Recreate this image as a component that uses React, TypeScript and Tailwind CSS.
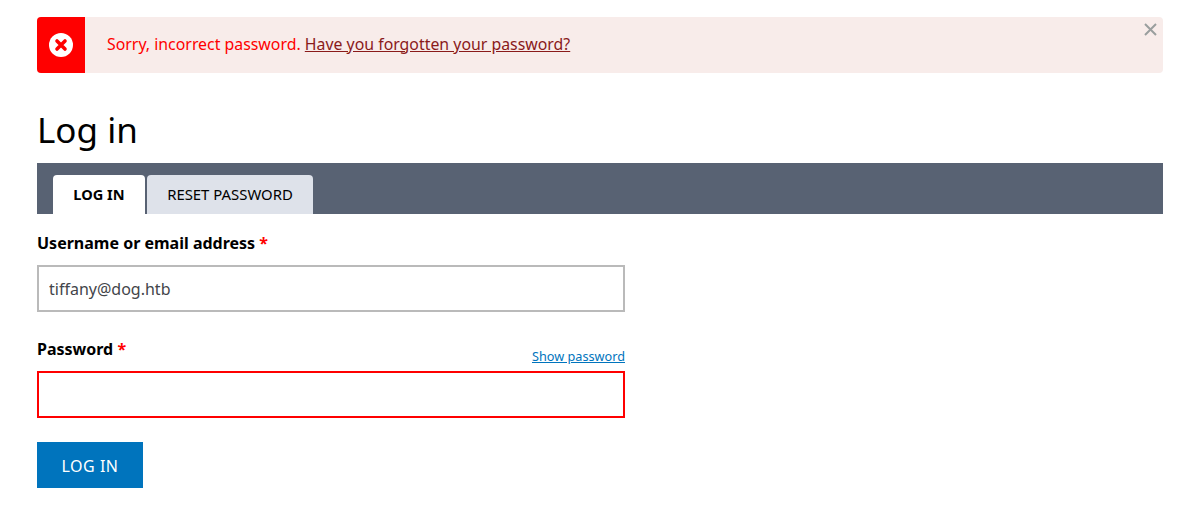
export default function App() {
  return (
    <div className="min-h-[510px] bg-white px-[37px] pt-[17px] pr-[14px] font-['Noto_Sans',sans-serif] text-black">
      {/* Error message */}
      <div className="relative flex h-[56px] items-center rounded-[4px] bg-[#f8ecea]">
        <div className="flex h-full w-[48px] items-center justify-center rounded-l-[4px] bg-[#ff0000]">
          <svg width="24" height="24" viewBox="0 0 24 24">
            <circle cx="12" cy="12" r="12" fill="#fff" />
            <path d="M8 8l8 8M16 8l-8 8" stroke="#ff0000" strokeWidth="3.6" strokeLinecap="round" />
          </svg>
        </div>
        <p className="ml-[22px] -mt-[1px] text-[15.87px] text-[#ff0000]">
          Sorry, incorrect password.{' '}
          <a href="#" className="text-[#8a1a1a] underline">Have you forgotten your password?</a>
        </p>
        <svg className="absolute right-[6px] top-[6px]" width="13" height="13" viewBox="0 0 13 13">
          <path d="M1 1l11 11M12 1L1 12" stroke="#9a9e9e" strokeWidth="2" />
        </svg>
      </div>

      <h1 className="mt-[30px] text-[35px] leading-[54px]">Log in</h1>

      {/* Tabs */}
      <div className="mt-[6px] flex h-[51px] items-end gap-[2px] bg-[#586273] pl-[16px]">
        <a href="#" className="flex h-[39px] w-[92px] items-center justify-center rounded-t-[4px] bg-white text-[14.6px] font-bold">LOG IN</a>
        <a href="#" className="flex h-[39px] w-[166px] items-center justify-center rounded-t-[4px] bg-[#dee2ea] text-[14.9px]">RESET PASSWORD</a>
      </div>

      {/* Form */}
      <form className="w-[588px]">
        <label className="mt-[17px] block text-[16px] font-bold leading-[24px]">
          Username or email address <span className="text-[#ff0000]">*</span>
        </label>
        <input
          readOnly
          value="tiffany@dog.htb"
          className="mt-[10px] block h-[47px] w-full border-2 border-[#bababa] px-[10px] text-[16px] text-[#43454a] outline-none"
        />

        <div className="mt-[25px] flex h-[28px] justify-between">
          <label className="text-[16px] font-bold leading-[24px]">
            Password <span className="text-[#ff0000]">*</span>
          </label>
          <a href="#" className="self-end text-[12.7px] leading-[18px] text-[#0074bd] underline">Show password</a>
        </div>
        <input
          readOnly
          className="mt-[6px] block h-[47px] w-full border-2 border-[#ff0000] px-[10px] text-[16px] outline-none"
        />

        <button type="button" className="mt-[24px] block h-[46px] w-[106px] bg-[#0074bd] pt-[2px] text-[16px] tracking-[0.5px] text-white">LOG IN</button>
      </form>
    </div>
  )
}
